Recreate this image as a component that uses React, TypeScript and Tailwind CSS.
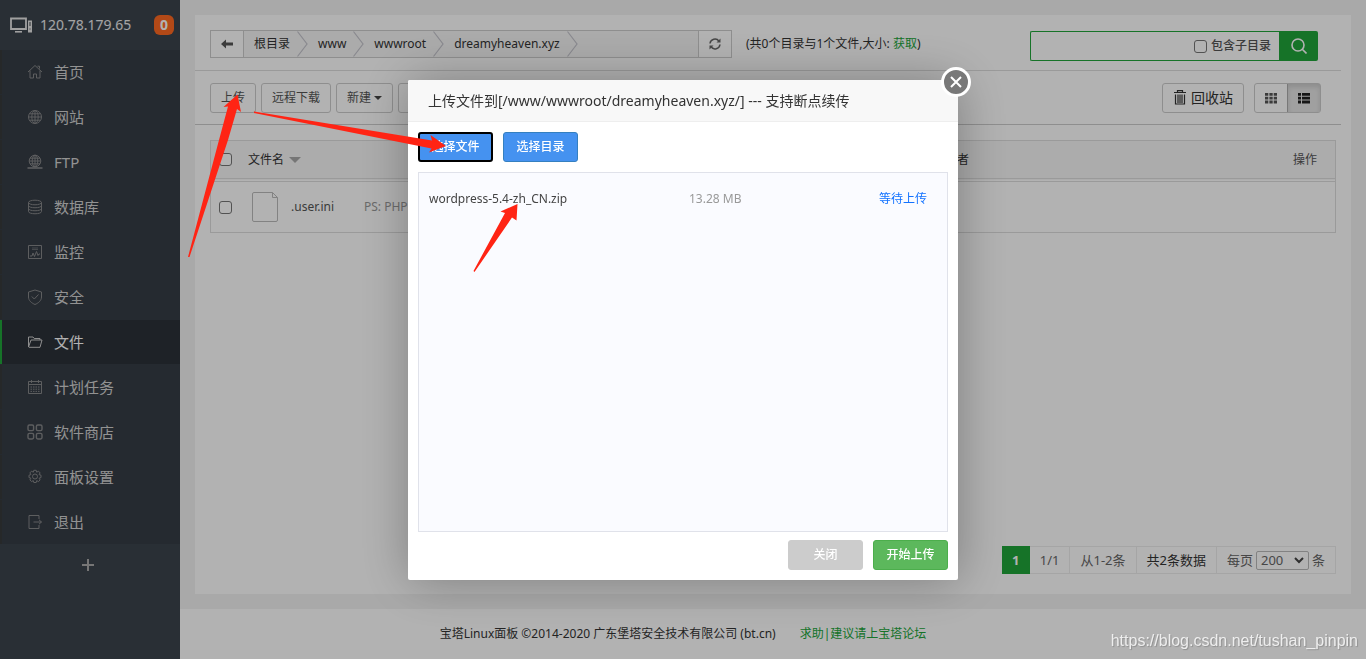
import { useState } from 'react';
import type { ReactNode } from 'react';

type MenuItem = { name: string; icon: ReactNode };

const menuItems: MenuItem[] = [
  {
    name: '首页',
    icon: <path d="M1 8 8 1.5 15 8M3 6.5V14h3.5v-4h3v4H13V6.5M10.5 2.2h2v2.4" />,
  },
  {
    name: '网站',
    icon: (
      <>
        <circle cx="8" cy="8" r="6.5" />
        <ellipse cx="8" cy="8" rx="3.2" ry="6.5" />
        <path d="M8 1.5v13M1.5 8h13M2.5 4.8h11M2.5 11.2h11" />
      </>
    ),
  },
  {
    name: 'FTP',
    icon: (
      <>
        <circle cx="8" cy="7" r="5.8" />
        <ellipse cx="8" cy="7" rx="2.8" ry="5.8" />
        <path d="M8 1v12M2.2 7h11.6M3 4.2h10M3 9.8h10" />
        <path d="M.5 14h15" strokeWidth="1.6" />
      </>
    ),
  },
  {
    name: '数据库',
    icon: (
      <>
        <ellipse cx="8" cy="3.5" rx="6.5" ry="2.3" />
        <path d="M1.5 3.5v9c0 3 13 3 13 0v-9M1.5 6.5c0 3 13 3 13 0M1.5 9.5c0 3 13 3 13 0" />
      </>
    ),
  },
  {
    name: '监控',
    icon: (
      <>
        <path d="M1.5 1.5h13v13h-13z" />
        <path d="M3 12h2l1-3 1.5 3.500 2-5 1.500 4 1-1.500h1" />
        <path d="M5 4h6M5 5.5h6" opacity=".6" />
      </>
    ),
  },
  {
    name: '安全',
    icon: <path d="M8 1 14.5 3v5c0 3.500-3 6-6.500 7.500C4.500 14 1.500 11.500 1.500 8V3zM4.800 7.500 7.300 10l4.200-4.500" />,
  },
  {
    name: '文件',
    icon: <path d="M1.500 13V3h4.500l1.200 1.500H13V6M1.500 13 4 6h11l-2 7.300H1.800" />,
  },
  {
    name: '计划任务',
    icon: (
      <>
        <path d="M1.5 2.500h13v12h-13zM1.500 5.500h13M4.500 1v3M11.500 1v3" />
        <path d="M3.500 8h9M3.500 10.200h9M3.500 12.400h9" strokeDasharray="1.500 1" />
      </>
    ),
  },
  {
    name: '软件商店',
    icon: (
      <g strokeWidth="1.400">
        <rect x="1" y="1" width="5.600" height="5.600" rx="1.400" />
        <rect x="9.400" y="1" width="5.600" height="5.600" rx="1.400" />
        <rect x="1" y="9.400" width="5.600" height="5.600" rx="1.400" />
        <rect x="9.400" y="9.400" width="5.600" height="5.600" rx="1.400" />
      </g>
    ),
  },
  {
    name: '面板设置',
    icon: (
      <>
        <circle cx="8" cy="7.500" r="2.500" />
        <path d="M6.800 1.300h2.400l.5 1.900 1.800-1 1.600 1.700-1 1.700 1.900.6v2.400l-1.900.6 1 1.700-1.600 1.700-1.800-1-.5 1.900H6.800l-.5-1.900-1.800 1-1.600-1.700 1-1.700L2 8.600V6.200l1.900-.6-1-1.700 1.600-1.700 1.800 1z" />
      </>
    ),
  },
  {
    name: '退出',
    icon: <path d="M12 5V1.500H2v13h10V11M6.500 8h8M12 5.800 14.500 8 12 10.200" />,
  },
];

const crumbs = ['根目录', 'www', 'wwwroot', 'dreamyheaven.xyz'];

const toolButton = 'h-[30px] rounded-[3px] border border-[#ccc] px-[10px] text-xs leading-4 text-[#555]';

function Sidebar() {
  const [active, setActive] = useState('文件');

  return (
    <aside className="w-[180px] shrink-0 bg-[#3c444d]">
      <div className="flex h-[50px] items-center pl-[10px] pr-[6px]">
        <svg className="h-4 w-[23px]" viewBox="0 0 23 16" fill="none" stroke="#e6e6e6">
          <path d="M1 1.500h15v10.500H1z" strokeWidth="1.800" />
          <path d="M5 14.800h7" strokeWidth="1.600" />
          <path d="M18 3.500h4v12h-4z" fill="#e6e6e6" stroke="none" />
          <path d="M20 5v4M19.500 12h1" stroke="#3c444d" />
        </svg>
        <span className="ml-[7px] text-sm text-white/90">120.78.179.65</span>
        <span className="ml-auto h-5 w-5 rounded-md bg-[#ff6921] text-center text-sm leading-5 font-bold text-white">0</span>
      </div>
      <nav className="bg-[#363d46]">
        {menuItems.map((item) => (
          <a
            key={item.name}
            href="#"
            onClick={() => setActive(item.name)}
            className={
              item.name === active
                ? 'mb-px flex h-11 items-center border-l-2 border-[#20a53a] bg-[#2c3138] pl-[25px] text-[15px] text-white'
                : 'mb-px flex h-11 items-center border-l-2 border-[#373a3b] pl-[25px] text-[15px] text-[#d2d2d2]'
            }
          >
            <svg
              className={item.name === active ? 'mr-[11px] h-4 w-4 stroke-[#ccc]' : 'mr-[11px] h-4 w-4 stroke-[#868789]'}
              viewBox="0 0 16 16"
              fill="none"
            >
              {item.icon}
            </svg>
            {item.name}
          </a>
        ))}
      </nav>
      <button className="mx-auto mt-[13px] block pr-[5px]" aria-label="添加">
        <svg className="h-4 w-4" viewBox="0 0 16 16" stroke="#aaa" strokeWidth="2">
          <path d="M8 2v12M2 8h12" />
        </svg>
      </button>
    </aside>
  );
}

function PathBar() {
  return (
    <div className="mr-[10px] flex h-14 items-start justify-between border-b border-[#ddd] pt-[15px] pl-[15px] pr-[23px]">
      <div className="flex items-center">
        <div className="flex h-7 w-[522px] border border-[#ccc]">
          <button className="flex w-[33px] items-center justify-center border-r border-[#ccc]" aria-label="返回">
            <svg className="h-3 w-3" viewBox="0 0 12 12" fill="#555">
              <path d="M0 6 5 1.500v3h7v3H5v3z" />
            </svg>
          </button>
          <div className="flex flex-1 bg-[#f5f5f5]">
            {crumbs.map((crumb) => (
              <a key={crumb} href="#" className="flex items-center pl-[10px] text-xs text-[#333]">
                {crumb}
                <svg className="ml-[7px] h-[26px] w-[11px]" viewBox="0 0 11 26" fill="none" stroke="#c4c4cc" strokeWidth="1.200">
                  <path d="M.5.5 10 13 .5 25.500" />
                </svg>
              </a>
            ))}
          </div>
          <button className="flex w-[33px] items-center justify-center border-l border-[#ccc]" aria-label="刷新">
            <svg className="h-3 w-3" viewBox="0 0 12 12" fill="none" stroke="#666" strokeWidth="1.500">
              <path d="M1 5.500A5 5 0 0 1 10 3.200M11 6.500A5 5 0 0 1 2 8.800" />
              <path d="M11.500.5v4h-4zM.5 11.500v-4h4z" fill="#666" stroke="none" />
            </svg>
          </button>
        </div>
        <p className="ml-[14px] text-xs text-[#333]">
          (共0个目录与1个文件,大小: <a href="#" className="text-[#20a53a]">获取</a>)
        </p>
      </div>
      <form className="mt-px flex h-[30px] w-72">
        <div className="flex min-w-0 flex-1 items-center rounded-l-[2px] border border-r-0 border-[#20a53a] pr-2">
          <input type="text" aria-label="搜索" className="h-full min-w-0 flex-1 px-2 text-xs outline-none" />
          <input id="sub" type="checkbox" className="h-[13px] w-[13px] appearance-none rounded-[3px] border border-[#767676] bg-white" />
          <label htmlFor="sub" className="ml-1 text-xs font-medium text-[#555]">包含子目录</label>
        </div>
        <button type="button" className="flex w-[39px] items-center justify-center rounded-r-[2px] bg-[#20a53a]" aria-label="搜索">
          <svg className="h-4 w-4" viewBox="0 0 16 16" fill="none" stroke="#fff" strokeWidth="1.600">
            <circle cx="7" cy="7" r="6" />
            <path d="m11 11 4.500 4.500" />
          </svg>
        </button>
      </form>
    </div>
  );
}

function Toolbar() {
  return (
    <div className="mr-[10px] flex h-[54px] items-start justify-between border-b border-[#ccc] pt-3 pl-[15px] pr-5">
      <div className="flex gap-[5px]">
        <button className={toolButton}>上传</button>
        <button className={toolButton}>远程下载</button>
        <button className={`${toolButton} flex items-center`}>
          新建
          <svg className="ml-[3px] h-1 w-2" viewBox="0 0 8 4" fill="#444">
            <path d="M0 0h8L4 4z" />
          </svg>
        </button>
        <button className={toolButton} aria-label="更多" />
      </div>
      <div className="flex gap-[10px]">
        <button className="flex h-[30px] items-center gap-1 rounded-[3px] border border-[#ccc] px-[10px] text-sm text-[#333]">
          <svg className="h-4 w-[14px]" viewBox="0 0 14 16" fill="none" stroke="#333" strokeWidth="1.200">
            <path d="M1 2.500h12M4.500 2.500V.6h5v1.900M2.500 4.500V14h9V4.500M5 4.500V13M7 4.500V13M9 4.500V13" />
          </svg>
          回收站
        </button>
        <div className="flex h-[30px] w-[67px] rounded-[3px] border border-[#ccc]">
          <button className="flex w-8 items-center justify-center" aria-label="图标视图">
            <svg className="h-3 w-3" viewBox="0 0 12 12" fill="#555">
              <path d="M0 1h3.300v2.800H0zM4.400 1h3.300v2.800H4.400zM8.700 1H12v2.800H8.700zM0 4.800h3.300v2.800H0zM4.400 4.800h3.300v2.800H4.400zM8.700 4.800H12v2.800H8.700zM0 8.600h3.300v2.800H0zM4.400 8.600h3.300v2.800H4.400zM8.700 8.600H12v2.800H8.700z" />
            </svg>
          </button>
          <button
            className="flex flex-1 items-center justify-center border-l border-[#adadad] bg-[#e6e6e6] inset-shadow-[0_3px_5px_rgba(0,0,0,0.125)]"
            aria-label="列表视图"
          >
            <svg className="h-3 w-3" viewBox="0 0 12 12" fill="#222">
              <path d="M0 1h3v2.800H0zM4 1h8v2.800H4zM0 4.800h3v2.800H0zM4 4.800h8v2.800H4zM0 8.600h3v2.800H0zM4 8.600h8v2.800H4z" />
            </svg>
          </button>
        </div>
      </div>
    </div>
  );
}

function FileTable() {
  const checkbox = 'block h-[13px] w-[13px] appearance-none rounded-[3px] border border-[#767676] bg-white';

  return (
    <div className="mt-[15px] mr-[15px] ml-[15px] border border-[#ddd]">
      <table className="w-full table-fixed border-collapse text-left text-xs text-[#555]">
        <thead>
          <tr className="h-[39px] border-b-4 border-double border-[#ddd] bg-[#f6f6f6]">
            <th className="w-[37px] pl-2"><input type="checkbox" aria-label="全选" className={checkbox} /></th>
            <th className="w-[685px] font-normal text-[#333]">
              <span className="flex items-center gap-[5px]">
                文件名
                <svg className="h-[6px] w-3" viewBox="0 0 12 6" fill="#aaa"><path d="M0 0h12L6 6z" /></svg>
              </span>
            </th>
            <th className="font-normal text-[#333]">所有者</th>
            <th className="pr-[18px] text-right font-normal">操作</th>
          </tr>
        </thead>
        <tbody>
          <tr className="h-[52px]">
            <td className="pl-2"><input type="checkbox" aria-label=".user.ini" className={checkbox} /></td>
            <td>
              <span className="flex items-center pl-1">
                <svg className="h-[30px] w-[26px]" viewBox="0 0 26 30" fill="none" stroke="#bbb">
                  <path d="M2 .5h18.500l5 5V28a1.500 1.500 0 0 1-1.500 1.500H2A1.500 1.500 0 0 1 .5 28V2A1.500 1.500 0 0 1 2 .5zM20.500.5v5h5" />
                </svg>
                <span className="ml-[13px]">.user.ini</span>
                <span className="ml-[30px] text-[#999]">PS: PHP</span>
              </span>
            </td>
            <td>root</td>
            <td />
          </tr>
        </tbody>
      </table>
    </div>
  );
}

function Pagination() {
  return (
    <div className="mt-auto mr-[15px] mb-5 flex h-7 self-end text-[13px] leading-[26px] text-[#666]">
      <span className="w-7 bg-[#20a53a] text-center leading-7 font-bold text-white">1</span>
      <span className="border border-l-0 border-[#ececec] px-[10px]">1/1</span>
      <span className="border border-l-0 border-[#ececec] px-[10px]">从1-2条</span>
      <span className="border border-l-0 border-[#ececec] px-[10px] text-[#333]">共2条数据</span>
      <label className="flex items-center gap-[3px] border border-l-0 border-[#ececec] px-[10px]">
        每页
        <span className="relative flex h-[19px] w-[53px]">
          <select
            className="w-full appearance-none rounded-[2px] border border-[#bbb] bg-white pl-1 text-[13px] leading-[17px]"
            defaultValue="200"
          >
            <option>100</option>
            <option>200</option>
            <option>500</option>
          </select>
          <svg
            className="pointer-events-none absolute top-[6px] right-[5px] h-[7px] w-[10px]"
            viewBox="0 0 10 7"
            fill="none"
            stroke="#444"
            strokeWidth="2"
          >
            <path d="m1 1 4 4 4-4" />
          </svg>
        </span>
        条
      </label>
    </div>
  );
}

function UploadDialog() {
  const primary = 'h-[30px] w-[75px] rounded-[3px] text-xs font-medium text-white';

  return (
    <div className="fixed inset-0 flex items-start justify-center bg-black/30 pt-20">
      <section role="dialog" className="relative w-[550px] rounded-[2px] bg-white shadow-[1px_1px_50px_rgba(0,0,0,0.3)]">
        <h2 className="h-[42px] rounded-t-[2px] border-b border-[#eee] bg-[#f8f8f8] pl-5 text-sm leading-[42px] text-[#333]">
          上传文件到[/www/wwwroot/dreamyheaven.xyz/] --- 支持断点续传
        </h2>
        <button
          className="absolute -top-[13px] -right-[13px] flex h-[30px] w-[30px] items-center justify-center rounded-full border-[3px] border-white bg-[#787878]"
          aria-label="关闭窗口"
        >
          <svg className="h-3 w-3" viewBox="0 0 12 12" stroke="#fff" strokeWidth="2">
            <path d="m1 1 10 10M11 1 1 11" />
          </svg>
        </button>
        <div className="p-[10px]">
          <div className="flex gap-[10px]">
            <button className={`${primary} border-2 border-black bg-[#4592f0]`}>选择文件</button>
            <button className={`${primary} border border-[#3580c0] bg-[#4592f0]`}>选择目录</button>
          </div>
          <ul className="mt-[10px] h-[360px] border border-[#e0e2ea] bg-[#fafbff] py-[10px] text-xs">
            <li className="flex h-8 items-center px-[10px]">
              <span className="w-[260px] text-[#444]">wordpress-5.4-zh_CN.zip</span>
              <span className="flex-1 text-[#999]">13.28 MB</span>
              <span className="pr-[10px] text-[#1272ff]">等待上传</span>
            </li>
          </ul>
          <div className="mt-2 flex justify-end gap-[10px]">
            <button className={`${primary} border border-[#ccc] bg-[#ccc]`}>关闭</button>
            <button className={`${primary} border border-[#4cae4c] bg-[#5cb85c]`}>开始上传</button>
          </div>
        </div>
      </section>
    </div>
  );
}

// red pointers drawn over the whole page
function Arrows() {
  return (
    <svg className="pointer-events-none absolute top-0 left-0 h-[659px] w-[1366px]" viewBox="0 0 1366 659" fill="#ff2414">
      <path d="M188 257 219 140 228 106.500 223.500 107 237.500 94.500 241 112 237 109 228 140 189.500 257z" />
      <path d="M254 111.500 432 140.500 430.500 135 446 146 429 152.500 431.500 148.500 254 113z" />
      <path d="M473.500 271 505 213 500.500 211.500 517.500 204 516.500 220.500 512 217.500 474.500 272z" />
    </svg>
  );
}

export default function App() {
  return (
    <div
      className="relative flex min-h-screen bg-[#f3f3f3] font-['Noto_Sans','Noto_Sans_CJK_SC',sans-serif]"
      lang="zh-CN"
    >
      <Sidebar />
      <div className="flex min-w-0 flex-1 flex-col">
        <main className="m-[15px] flex flex-1 flex-col bg-white">
          <PathBar />
          <Toolbar />
          <FileTable />
          <Pagination />
        </main>
        <footer className="flex h-[50px] items-center justify-center gap-6 bg-white pr-[180px] text-xs text-[#333]">
          <span>宝塔Linux面板 ©2014-2020 广东堡塔安全技术有限公司 (bt.cn)</span>
          <a href="#" className="text-[#20a53a]">求助|建议请上宝塔论坛</a>
        </footer>
      </div>
      <UploadDialog />
      <Arrows />
      <span className="absolute right-2 bottom-[6px] font-['Liberation_Sans',sans-serif] text-base text-white/80 text-shadow-[1px_1px_1px_rgba(0,0,0,0.2)]">
        https://blog.csdn.net/tushan_pinpin
      </span>
    </div>
  );
}
